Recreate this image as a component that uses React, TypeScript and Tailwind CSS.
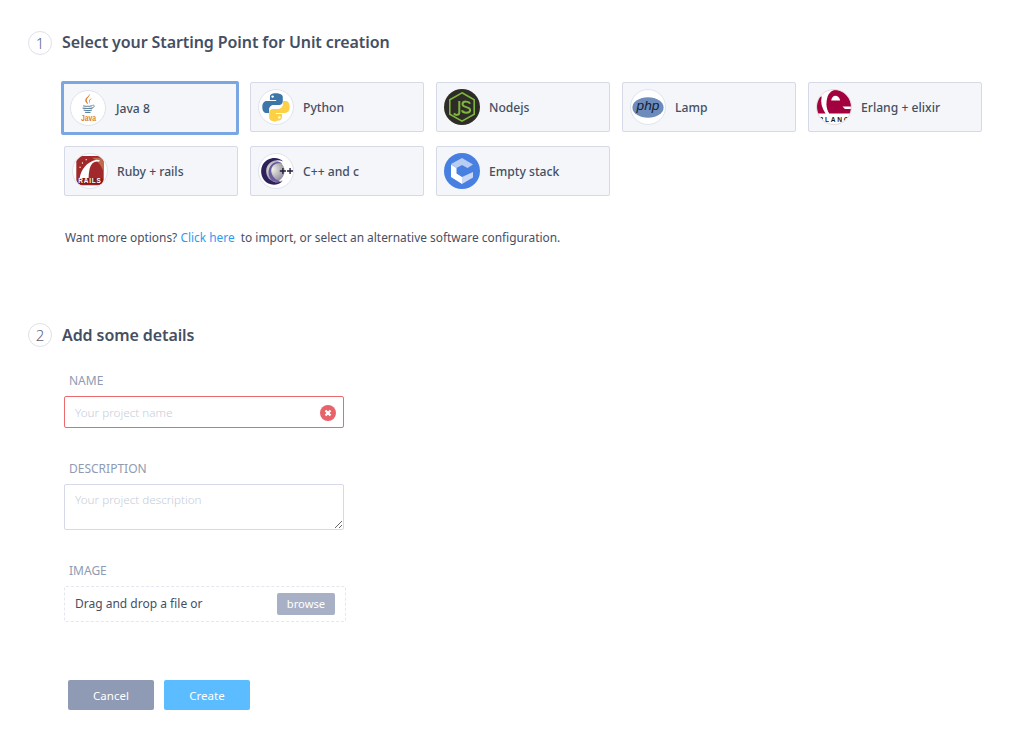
import React from "react";

function IconWrap({ children, className = "" }: { children: React.ReactNode; className?: string }) {
  return (
    <div className={`w-[36px] h-[36px] rounded-full border border-[#dfe3ee] bg-white overflow-hidden shrink-0 flex items-center justify-center ${className}`}>
      {children}
    </div>
  );
}

const JavaIcon = () => (
  <IconWrap>
    <svg viewBox="0 0 36 36" className="w-full h-full">
      <path d="M19.500 3c1.300 3-3.600 4.600-2.700 7.600.3 1.200 1.300 2.200 1.500 3.400-2.300-1.500-3.800-3.100-3.100-5.100.8-2 3.900-3 4.300-5.900z" fill="#dd7f2a" />
      <path d="M22.300 7.500c-1.900 1-3.600 2-3.100 3.800.3 1 1 1.400.9 2.500.5-1.200-.4-1.800-.2-3 .2-1.300 1.500-2 2.400-3.300z" fill="#dd7f2a" />
      <path d="M12.800 15.500c2.200.6 7.400.6 9.400 0M12.200 17.900c2.500.7 8.400.7 10.500 0M13.400 20.200c2.300.6 6.700.6 8.800 0M14.800 22.400c1.800.4 4.400.4 6 0" stroke="#5f829f" strokeWidth="1.100" fill="none" />
      <path d="M22.500 15.200c2.700-.9 3.500 1.800-.8 3" stroke="#5f829f" strokeWidth=".9" fill="none" />
      <text x="18.500" y="32" textAnchor="middle" fontFamily="Liberation Sans, sans-serif" fontSize="9.500" fontWeight="700" fill="#dd7f2a" textLength="16" lengthAdjust="spacingAndGlyphs">Java</text>
    </svg>
  </IconWrap>
);

const PythonIcon = () => (
  <IconWrap>
    <svg viewBox="0 0 36 36" className="w-full h-full">
      <path d="M17.800 3.500c-5 0-6.200 1.800-6.200 4v3h6.600v1.200H8.500c-2.700 0-5 2-5 6.200 0 4.400 1.900 6.400 4.600 6.400h2.600v-3.500c0-2.600 2.200-4.800 4.800-4.800h5.800c2.200 0 3.900-1.800 3.900-4V7.500c0-2.200-2.700-4-7.400-4z" fill="#3d77a9" />
      <circle cx="14.400" cy="7" r="1.300" fill="#fff" />
      <path d="M18.200 32.500c5 0 6.200-1.800 6.200-4v-3h-6.600v-1.200h9.700c2.700 0 5-2 5-6.200 0-4.400-1.900-6.400-4.600-6.400h-2.600v3.500c0 2.600-2.200 4.800-4.800 4.800h-5.800c-2.200 0-3.900 1.800-3.900 4v5.500c0 2.200 2.700 4 7.400 4z" fill="#fdd045" />
      <circle cx="21.600" cy="29" r="1.300" fill="#fff" />
    </svg>
  </IconWrap>
);

const NodeIcon = () => (
  <div className="w-[36px] h-[36px] shrink-0">
    <svg viewBox="0 0 36 36" className="w-full h-full">
      <circle cx="18" cy="18" r="18" fill="#2d2c27" />
      <path d="M18 3.800 30.200 10.800v14.400L18 32.200 5.800 25.200V10.800z" fill="none" stroke="#7fb53c" strokeWidth="1.600" />
      <path d="M15.300 12v11.400c0 3-4 3.200-5.400 1" fill="none" stroke="#7fb53c" strokeWidth="2" />
      <path d="M26 14.800c-.8-2.700-7.300-3.200-7.500.3-.2 4 7.700 2 7.700 6 0 3.500-7.300 3.500-8.200.2" fill="none" stroke="#7fb53c" strokeWidth="2" />
    </svg>
  </div>
);

const PhpIcon = () => (
  <IconWrap>
    <svg viewBox="0 0 36 36" className="w-full h-full">
      <ellipse cx="18" cy="18.500" rx="16.500" ry="10.800" fill="#6d8cbb" />
      <text x="18" y="21.500" textAnchor="middle" fontFamily="Liberation Sans, sans-serif" fontStyle="italic" fontSize="14.500" fill="#141c30">php</text>
    </svg>
  </IconWrap>
);

const ErlangIcon = () => (
  <IconWrap className="border-[#e3d8de]">
    <svg viewBox="0 0 36 36" className="w-full h-full">
      <path d="M0 7h5C3.500 13 5 19 9 25H0z" fill="#a2003e" />
      <path d="M10 15C10 7 13 1 19 0h6c5 2 9 7 11 14v11H13C11 22 10 18 10 15z" fill="#a2003e" />
      <path d="M15 11c.5-3 2.300-4.800 4.500-4.800S24 8 24.500 11z" fill="#fff" />
      <path d="M27 17.500H36V20h-6.500z" fill="#fff" />
      <text x="18.500" y="33.500" textAnchor="middle" fontFamily="Liberation Sans, sans-serif" fontWeight="700" fontSize="7" fill="#1a1a1a" letterSpacing="1.800">RLANG</text>
    </svg>
  </IconWrap>
);

const RailsIcon = () => (
  <IconWrap>
    <svg viewBox="0 0 36 36" className="w-full h-full">
      <rect x="3.500" y="2" width="29" height="31" rx="6" fill="#a2292b" />
      <path d="M20 4h7c3 0 5 2.500 5 5v9c-2-6-6-11-12-14z" fill="#bd6a4d" />
      <path d="M7 25.500c1.500-9 7-17 18-19.500 1.300 0 2.600.4 3.500 1l-1 1.200c-5.500-1-8.500 2.300-10 8-.6 3-1 6-1 9.300z" fill="#fff" />
      <circle cx="7.500" cy="14" r=".7" fill="#fff" />
      <circle cx="10" cy="9.500" r=".7" fill="#fff" />
      <circle cx="14" cy="6" r=".7" fill="#fff" />
      <rect x="5" y="25.500" width="26" height="6.500" rx="1.200" fill="#7f1a1d" />
      <text x="18" y="31" textAnchor="middle" fontFamily="Liberation Sans, sans-serif" fontWeight="700" fontSize="6.800" fill="#fff" letterSpacing=".9">RAILS</text>
    </svg>
  </IconWrap>
);

const CppIcon = () => (
  <IconWrap>
    <svg viewBox="0 0 36 36" className="w-full h-full">
      <defs>
        <radialGradient id="cg" cx=".45" cy=".42" r=".6">
          <stop offset="0" stopColor="#f0f0e6" />
          <stop offset="1" stopColor="#8f8c9c" />
        </radialGradient>
      </defs>
      <circle cx="15.500" cy="18" r="11.500" fill="url(#cg)" />
      <path d="M25.500 8C21 2.500 8.500 2.500 3.600 12 -.5 21 5 32.500 15.500 32.500c4 0 7.500-1.500 9.500-4-3.300 1.700-6.500 2-9.500.8C9 27 6.800 21 7.800 15.500 9.300 8.500 18.500 4.200 25.500 8z" fill="#2e2159" />
      <path d="M25 28c-5.500 3.300-13 1.500-14.700-6C9.300 16 12 9.500 19 8.500c2.200-.2 4 .5 5.500 1.500-4.500-1-10.500.3-11.500 6.500-.8 6 5.500 14 12 11.500z" fill="#6a5a9e" />
      <path d="M22 18h6.500M25.300 14.700v6.600M29.700 18H36M32.900 14.900v6.200" stroke="#221c38" strokeWidth="1.400" fill="none" />
    </svg>
  </IconWrap>
);

const EmptyIcon = () => (
  <div className="w-[36px] h-[36px] shrink-0">
    <svg viewBox="0 0 36 36" className="w-full h-full">
      <circle cx="18" cy="18" r="18" fill="#4880e2" />
      <path d="M7 11 18 5l11 6.500-5.500 3.500L18 12l-5.500 3z" fill="#b9cdf3" />
      <path d="M7 11.500V24l11 7v-7l-5.500-3.500V15z" fill="#fff" />
      <path d="M18 31l11-6.500V19l-11 5z" fill="#c8d8f6" />
    </svg>
  </div>
);

function Card({ icon, label, selected = false }: { icon: React.ReactNode; label: string; selected?: boolean }) {
  return (
    <div
      className={
        selected
          ? "w-[178px] h-[54px] -ml-[3px] -mr-[1px] -mt-[1px] -mb-[3px] flex items-center gap-[10px] pl-[6px] bg-[#f4f6f9] border-[3px] border-[#7aa7e2] rounded-[2px]"
          : "w-[174px] h-[50px] flex items-center gap-[9px] pl-[7px] bg-[#f4f6f9] border border-[#d5d9e8] rounded-[2px]"
      }
    >
      {icon}
      <span className="text-[12.15px] font-medium text-[#454f63] whitespace-nowrap pt-[2px]">{label}</span>
    </div>
  );
}

function Heading({ n, children, raised = false }: { n: number; children: React.ReactNode; raised?: boolean }) {
  return (
    <div className="flex items-start gap-[10px]">
      <div className="w-[24px] h-[24px] rounded-full border border-[#dfe1e8] flex items-center justify-center text-[15px] font-light text-[#5a6480]">
        {n}
      </div>
      <h2 className={`text-[16px] font-semibold tracking-[-0.09px] text-[#454f63] leading-[24px] ${raised ? "-mt-[1px]" : ""}`}>{children}</h2>
    </div>
  );
}

export default function App() {
  return (
    <div
      className="w-[1022px] h-[744px] bg-white overflow-hidden pl-[28px] pt-[31px]"
      style={{ fontFamily: '"Noto Sans", "Open Sans", sans-serif' }}
    >
      <div className="h-[24px]">
        <Heading n={1} raised>Select your Starting Point for Unit creation</Heading>
      </div>

      <div className="ml-[36px] mt-[27px] flex flex-col gap-[14px]">
        <div className="flex gap-[12px] items-start">
          <Card selected icon={<JavaIcon />} label="Java 8" />
          <Card icon={<PythonIcon />} label="Python" />
          <Card icon={<NodeIcon />} label="Nodejs" />
          <Card icon={<PhpIcon />} label="Lamp" />
          <Card icon={<ErlangIcon />} label="Erlang + elixir" />
        </div>
        <div className="flex gap-[12px] items-start">
          <Card icon={<RailsIcon />} label="Ruby + rails" />
          <Card icon={<CppIcon />} label="C++ and c" />
          <Card icon={<EmptyIcon />} label="Empty stack" />
        </div>
      </div>

      <p className="ml-[37px] mt-[32px] text-[11.9px] leading-[18px] text-[#454f63] whitespace-pre">
        Want more options? <span className="text-[#2f9bf0]">Click here</span>{"  "}to import, or select an alternative software configuration.
      </p>

      <div className="mt-[77px]">
        <Heading n={2}>Add some details</Heading>
      </div>

      <div className="ml-[36px] mt-[25px] w-[282px]">
        <label className="block ml-[5px] text-[12px] leading-[18px] text-[#8f9bb3]">NAME</label>
        <div className="mt-[6px] w-[280px] h-[32px] border border-[#ea6a6e] rounded-[2px] flex items-center justify-between pl-[10px] pr-[7px]">
          <span className="text-[11.7px] font-light pt-[2px] text-[#c6ccd9]">Your project name</span>
          <svg viewBox="0 0 16 16" className="w-[16px] h-[16px] mt-[1px]">
            <circle cx="8" cy="8" r="8" fill="#e8626a" />
            <path d="M5.500 5.500l5 5M10.500 5.500l-5 5" stroke="#fff" strokeWidth="2.200" />
          </svg>
        </div>

        <label className="block ml-[5px] mt-[32px] text-[12px] leading-[18px] text-[#8f9bb3]">DESCRIPTION</label>
        <textarea
          readOnly
          placeholder="Your project description"
          className="block mt-[6px] w-[280px] h-[46px] border border-[#d5d9e8] rounded-[2px] px-[10px] pt-[6px] text-[11.7px] font-light leading-[16px] outline-none placeholder:text-[#c6ccd9]"
        />

        <label className="block ml-[5px] mt-[32px] text-[12px] leading-[18px] text-[#8f9bb3]">IMAGE</label>
        <div className="mt-[6px] w-[282px] h-[36px] border border-dashed border-[#e4e7f0] rounded-[2px] flex items-center justify-between pl-[10px] pr-[10px]">
          <span className="text-[12px] text-[#454f63]">Drag and drop a file or</span>
          <button className="w-[58px] h-[22px] rounded-[2px] bg-[#a8b0c5] text-white text-[11.2px] pt-[1px]">browse</button>
        </div>

        <div className="ml-[4px] mt-[58px] flex gap-[10px]">
          <button className="w-[86px] h-[30px] rounded-[2px] bg-[#8f9ab4] text-white text-[11.5px] pt-[2px]">Cancel</button>
          <button className="w-[86px] h-[30px] rounded-[2px] bg-[#5bbcff] text-white text-[11.5px] pt-[2px]">Create</button>
        </div>
      </div>
    </div>
  );
}
